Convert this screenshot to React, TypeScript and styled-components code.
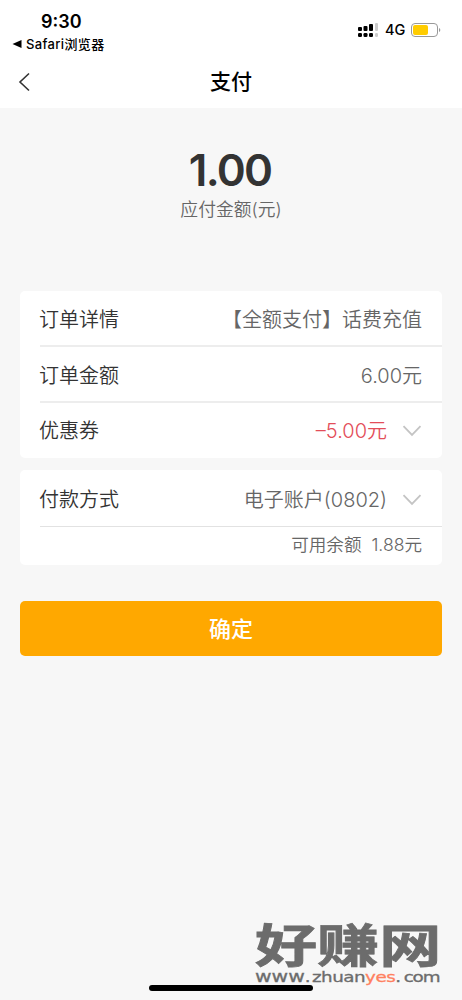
import React from 'react';
import styled, { createGlobalStyle } from 'styled-components';

const GlobalStyle = createGlobalStyle`
  * {
    box-sizing: border-box;
  }

  body {
    margin: 0;
    background: #f7f7f7;
    font-family: Inter, 'Noto Sans CJK SC', sans-serif;
  }
`;

const Page = styled.div`
  position: relative;
  display: flex;
  flex-direction: column;
  width: 462px;
  height: 1000px;
  overflow: hidden;
  background: #f7f7f7;
`;

const Header = styled.header`
  height: 108px;
  background: #fff;
  color: #000;
`;

const StatusBar = styled.div`
  display: flex;
  justify-content: space-between;
  height: 56px;
  padding: 11px 21px 0 12px;
`;

const Clock = styled.div`
  padding-left: 29px;
  font-size: 18px;
  font-weight: 600;
  line-height: 21px;
`;

const BackToApp = styled.div`
  display: flex;
  align-items: center;
  gap: 4px;
  height: 24px;
  font-size: 13px;
  font-weight: 500;
  line-height: 24px;
  letter-spacing: 0.35px;
  white-space: nowrap;
`;

const StatusIcons = styled.div`
  display: flex;
  align-items: center;
  height: 38px;
`;

const Network = styled.span`
  width: 20px;
  margin: 0 6px 1px 6px;
  font-size: 14.5px;
  font-weight: 500;
`;

const TitleBar = styled.div`
  display: grid;
  grid-template-columns: 60px 1fr 60px;
  align-items: center;
  height: 52px;
`;

const BackButton = styled.button`
  display: flex;
  padding: 0 0 0 18px;
  border: none;
  background: none;
`;

const Title = styled.h1`
  margin: 0;
  text-align: center;
  font-size: 21px;
  font-weight: 500;
  line-height: 30px;
`;

const Summary = styled.section`
  height: 183px;
  padding-top: 34px;
  text-align: center;
`;

const Amount = styled.div`
  padding-right: 2px;
  color: #333;
  font-size: 44px;
  font-weight: 600;
  line-height: 56px;
  letter-spacing: -1.8px;
`;

const AmountLabel = styled.div`
  padding-top: 1px;
  color: #666;
  font-size: 17.8px;
  font-weight: 350;
  line-height: 22px;
`;

const Card = styled.section<{ $height: number }>`
  height: ${({ $height }) => $height}px;
  margin: 0 20px 12px;
  padding-left: 20px;
  border-radius: 5px;
  background: #fff;
`;

const Row = styled.div<{ $divider?: 'thick' | 'thin' }>`
  display: flex;
  align-items: center;
  justify-content: space-between;
  height: ${({ $divider }) => ($divider === 'thin' ? 57 : 56)}px;
  padding: ${({ $divider }) => ($divider ? '3px 20px 0 0' : '0 20px 0 0')};
  border-bottom: ${({ $divider }) => ($divider ? `${$divider === 'thin' ? 1 : 2}px solid` : 'none')};
  border-color: ${({ $divider }) => ($divider === 'thin' ? '#e2e2e2' : '#ededed')};
  font-size: 20px;
  font-weight: 350;
  line-height: 30px;
`;

const Label = styled.span`
  margin-left: -1px;
  color: #333;
`;

const Value = styled.span<{ $color?: string }>`
  display: flex;
  align-items: center;
  gap: 15px;
  color: ${({ $color }) => $color || '#666'};
  white-space: nowrap;
`;

const Balance = styled.div`
  padding-right: 20px;
  color: #666;
  font-size: 17.6px;
  font-weight: 350;
  line-height: 35px;
  text-align: right;
  white-space: pre;
`;

const SubmitButton = styled.button`
  height: 55px;
  margin: 24px 20px 0;
  padding: 0 0 4px;
  border: none;
  border-radius: 5px;
  background: #ffa800;
  color: #fff;
  font-family: inherit;
  font-size: 22px;
  font-weight: 500;
`;

const Watermark = styled.div`
  position: absolute;
  left: 255px;
  top: 918px;
  width: 190px;
  color: #6c6c6c;
`;

const WatermarkName = styled.div`
  width: max-content;
  height: 51px;
  font-family: 'Noto Sans CJK SC', sans-serif;
  font-size: 46px;
  font-weight: 700;
  line-height: 48px;
  white-space: nowrap;
  transform: scaleX(1.35);
  transform-origin: left;
  -webkit-text-stroke: 0.8px #6c6c6c;
`;

const WatermarkUrl = styled.div`
  display: flex;
  align-items: baseline;
  width: max-content;
  font-family: 'DejaVu Sans', sans-serif;
  font-size: 14px;
  line-height: 17px;
  transform: scaleX(1.31);
  transform-origin: left;
  -webkit-text-stroke: 0.3px;
`;

const UrlPart = styled.span<{ $size?: number; $spacing?: number; $accent?: boolean }>`
  color: ${({ $accent }) => ($accent ? '#ff8060' : 'inherit')};
  font-size: ${({ $size = 14 }) => $size}px;
  letter-spacing: ${({ $spacing = -0.4 }) => $spacing}px;
`;

const HomeIndicator = styled.div`
  position: absolute;
  left: 149px;
  bottom: 9px;
  width: 164px;
  height: 6px;
  border-radius: 3px;
  background: #000;
`;

const SignalIcon = () => (
  <svg width="21" height="16" viewBox="0 0 21 16">
    <g fill="#000">
      <rect x="0" y="5" width="4" height="4" rx="1" />
      <rect x="5.5" y="4" width="4" height="5" rx="1" />
      <rect x="11" y="2" width="4" height="7" rx="1" />
      <rect x="0" y="11" width="4" height="4" rx="1.3" />
      <rect x="5.5" y="11" width="4" height="4" rx="1.3" />
      <rect x="11" y="11" width="4" height="4" rx="1.3" />
    </g>
    <rect x="17" y="1" width="3" height="8" rx="1" fill="#ccc" />
    <rect x="17" y="11" width="3" height="4" rx="1.3" fill="#ccc" />
  </svg>
);

const BatteryIcon = () => (
  <svg width="30" height="14" viewBox="0 0 30 14">
    <rect x="0.5" y="0.5" width="26" height="13" rx="3.5" fill="#fff" stroke="#999" />
    <rect x="2" y="2" width="15" height="10" rx="2" fill="#fc0" />
    <path d="M28 5v4q1.3-.6 1.3-2T28 5" fill="#999" />
  </svg>
);

const ChevronDown = () => (
  <svg width="20" height="12" viewBox="0 0 20 12" fill="none">
    <path d="M1.5 1.2l8.5 8.8 8.5-8.8" stroke="#c4c4c4" strokeWidth="1.8" />
  </svg>
);

const App: React.FC = () => {
  return (
    <Page>
      <GlobalStyle />
      <Header>
        <StatusBar>
          <div>
            <Clock>9:30</Clock>
            <BackToApp>
              <svg width="10" height="8" viewBox="0 0 10 8">
                <path d="M0.5 4L9.5 0v8z" />
              </svg>
              Safari浏览器
            </BackToApp>
          </div>
          <StatusIcons>
            <SignalIcon />
            <Network>4G</Network>
            <BatteryIcon />
          </StatusIcons>
        </StatusBar>
        <TitleBar>
          <BackButton aria-label="返回">
            <svg width="12" height="20" viewBox="0 0 12 20" fill="none">
              <path d="M11 1.5L2 10l9 8.5" stroke="#333" strokeWidth="1.6" />
            </svg>
          </BackButton>
          <Title>支付</Title>
        </TitleBar>
      </Header>

      <Summary>
        <Amount>1.00</Amount>
        <AmountLabel>应付金额(元)</AmountLabel>
      </Summary>

      <Card $height={167}>
        <Row $divider="thick">
          <Label>订单详情</Label>
          <Value>【全额支付】话费充值</Value>
        </Row>
        <Row $divider="thick">
          <Label>订单金额</Label>
          <Value>6.00元</Value>
        </Row>
        <Row>
          <Label>优惠券</Label>
          <Value $color="#e34d59">
            –5.00元
            <ChevronDown />
          </Value>
        </Row>
      </Card>

      <Card $height={95}>
        <Row $divider="thin">
          <Label>付款方式</Label>
          <Value>
            电子账户(0802)
            <ChevronDown />
          </Value>
        </Row>
        <Balance>可用余额  1.88元</Balance>
      </Card>

      <SubmitButton>确定</SubmitButton>

      <Watermark>
        <WatermarkName>好赚网</WatermarkName>
        <WatermarkUrl>
          <UrlPart $size={15.5} $spacing={0}>
            www
          </UrlPart>
          <UrlPart $spacing={1}>.</UrlPart>
          <UrlPart>zhuan</UrlPart>
          <UrlPart $accent>yes</UrlPart>
          <UrlPart $spacing={2}>.</UrlPart>
          <UrlPart $spacing={-0.9}>com</UrlPart>
        </WatermarkUrl>
      </Watermark>
      <HomeIndicator />
    </Page>
  );
};

export default App;
